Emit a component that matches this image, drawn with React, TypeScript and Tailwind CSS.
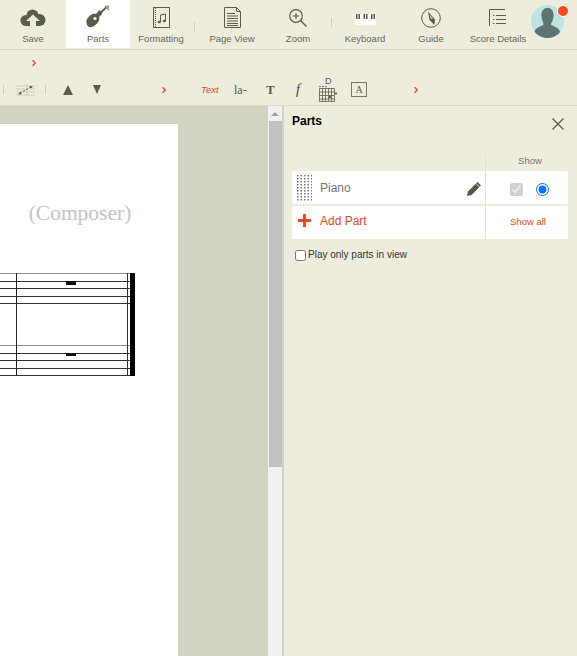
const dark = "#5c5c4c";

function ToolItem({ label, width, active, children }: { label: string; width: string; active?: boolean; children: React.ReactNode }) {
  return (
    <div className={`flex h-full shrink-0 flex-col items-center ${width} ${active ? "bg-white" : ""}`}>
      <div className="flex h-[28px] items-end justify-center">{children}</div>
      <span className="mt-[5px] whitespace-nowrap text-[9.500px] leading-[12px] text-[#666659]">{label}</span>
    </div>
  );
}

function Sep({ className = "" }: { className?: string }) {
  return <div className={`h-[9px] w-px shrink-0 bg-[#cfcdbb] ${className}`} />;
}

function Chevron({ className = "" }: { className?: string }) {
  return (
    <svg width="6" height="8" viewBox="0 0 6 8" className={`shrink-0 ${className}`}>
      <path d="M1.500 1.200 4.300 4 1.500 6.800" fill="none" stroke="#ee4a22" strokeWidth="1.300" />
    </svg>
  );
}

function Staff() {
  const ys = [273, 281, 288, 296, 303, 345, 353, 360, 368, 375];
  return (
    <svg width="178" height="110" viewBox="0 270 178 110" className="mt-[45px] block">
      {ys.map((y, i) => (
        <line key={i} x1="0" x2="130" y1={y + 0.5} y2={y + 0.5} stroke={i % 5 === 0 ? "#8a8a8a" : "#333"} strokeWidth="1" />
      ))}
      <line x1="16.500" x2="16.500" y1="273" y2="376" stroke="#222" />
      <line x1="127.500" x2="127.500" y1="273" y2="376" stroke="#333" />
      <rect x="130" y="273" width="5" height="103" fill="#000" />
      <rect x="66" y="281" width="10" height="4" fill="#111" />
      <rect x="66" y="353" width="10" height="3" fill="#111" />
    </svg>
  );
}

export default function App() {
  return (
    <div className="flex h-[656px] w-[577px] flex-col overflow-hidden bg-[#eeecdd] font-['Liberation_Sans',Arial,sans-serif]">
      {/* main toolbar */}
      <div className="relative flex h-[50px] shrink-0 items-stretch border-b border-[#d3d1bf] pb-px">
        <ToolItem label="Save" width="w-[66px]">
          <svg width="26" height="18" viewBox="0 0 26 18" className="mb-px">
            <circle cx="6" cy="11.500" r="5.500" fill={dark} />
            <circle cx="12.500" cy="6.500" r="6" fill={dark} />
            <circle cx="19.500" cy="11" r="6" fill={dark} />
            <path d="M6 9h14v8H6Z" fill={dark} />
            <path d="M13 5.500 20 12h-4v6h-6v-6H6Z" fill="#eeecdd" />
          </svg>
        </ToolItem>
        <ToolItem label="Parts" width="w-[64px]" active>
          <svg width="24" height="23" viewBox="0 0 24 23">
            <path d="M13.500 5.500c1.300.5 2.300 1.800 2.500 3 .2 1.200-1.700 1.700-2.500 3-.7 1.100.3 2.200-.5 4-.9 2.100-3.800 5.500-7 6.500-2 .6-3.500-.2-4.700-1.500C.900 19 0 17.500.500 15.500c.7-2.800 4-5.700 6-6.500 1.700-.7 2.800.2 4-.5 1.200-.7 1.500-3.500 3-3Z" fill={dark} />
            <circle cx="9" cy="13.500" r="1.600" fill="#fff" />
            <path d="m11.500 11 8.500-8.500" stroke={dark} strokeWidth="1.800" />
            <path d="m19 1 4 4M21 .5l2 2" stroke="#8a8a7c" strokeWidth="1.500" />
          </svg>
        </ToolItem>
        <ToolItem label="Formatting" width="w-[62px]">
          <svg width="17" height="21" viewBox="0 0 17 21">
            <rect x=".5" y=".5" width="16" height="20" fill="none" stroke={dark} />
            <path d="M2.500 1v19" stroke={dark} strokeDasharray="1 1" />
            <path d="M7.500 15V8l5-1v7" fill="none" stroke={dark} />
            <ellipse cx="6.300" cy="15" rx="1.600" ry="1.200" fill={dark} />
            <ellipse cx="11.300" cy="14" rx="1.600" ry="1.200" fill={dark} />
          </svg>
        </ToolItem>
        <div className="flex w-[7px] shrink-0 items-center justify-start pt-[5px]">
          <Sep className="ml-[2px]" />
        </div>
        <ToolItem label="Page View" width="w-[66px]">
          <svg width="17" height="21" viewBox="0 0 17 21">
            <path d="M.5.5h12l4 4v16H.500Z" fill="none" stroke={dark} />
            <path d="M12.500.5v4h4" fill="none" stroke={dark} />
            <path d="M3 6.500h8M3 9h11M3 11.500h11M3 14h11M3 16.500h11M3 18.500h11" stroke={dark} />
          </svg>
        </ToolItem>
        <ToolItem label="Zoom" width="w-[66px]">
          <svg width="18" height="18" viewBox="0 0 18 18" className="mb-px">
            <circle cx="7" cy="7" r="6.300" fill="none" stroke={dark} strokeWidth="1.200" />
            <path d="M7 4v6M4 7h6" stroke={dark} strokeWidth="1.200" />
            <path d="m11.500 11.500 6 6" stroke={dark} strokeWidth="1.200" />
          </svg>
        </ToolItem>
        <div className="relative w-0 shrink-0">
          <Sep className="absolute left-0 top-[18px]" />
        </div>
        <ToolItem label="Keyboard" width="w-[68px]">
          <div className="relative mb-[3px] h-[11px] w-[21px] bg-white">
            <svg width="21" height="11" viewBox="0 0 21 11" className="absolute left-0 top-0">
              <path d="M1 0h1.500v5H1ZM3.500 0H5v5H3.500ZM8.500 0H10v5H8.500ZM11 0h1.500v5H11ZM16 0h1.500v5H16ZM18.500 0H20v5h-1.500Z" fill="#55554a" />
            </svg>
          </div>
        </ToolItem>
        <ToolItem label="Guide" width="w-[64px]">
          <svg width="20" height="20" viewBox="0 0 20 20">
            <circle cx="10" cy="10" r="9.300" fill="none" stroke={dark} strokeWidth="1" />
            <path d="M7 3.500 14 11.500 13.500 17 8.500 12Z" fill={dark} />
            <path d="M8.500 6.500 12 11l-2.200-.500Z" fill="#eeecdd" />
          </svg>
        </ToolItem>
        <ToolItem label="Score Details" width="w-[70px]">
          <svg width="18" height="18" viewBox="0 0 18 18" className="mb-px">
            <path d="M16 .5H.5V17" fill="none" stroke={dark} />
            <path d="M7 6.500h10M7 10.500h10M7 14.500h10" stroke={dark} />
            <path d="M4 6.500h1.500M4 10.500h1.500M4 14.500h1.500" stroke={dark} />
          </svg>
        </ToolItem>
        {/* avatar */}
        <div className="absolute left-[530px] top-[4px] h-[35px] w-[35px] overflow-hidden rounded-full border border-[#e8f0e8] bg-[#bfe3e0]">
          <svg width="33" height="33" viewBox="0 0 35 35">
            <path d="M11 11c0-5 3-8 6.500-8s6.500 3 6.500 8c0 3-1 6-2.500 8-.5 1-.3 2 .5 2.500 3 1.500 7.500 3 8.500 6V35H4v-7.500c1-3 5.500-4.500 8.500-6 .8-.5 1-1.500.5-2.500-1-2-2-5-2-8Z" fill="#5f7370" />
          </svg>
        </div>
        <div className="absolute left-[557px] top-[5px] h-[12px] w-[12px] rounded-full border border-white bg-[#f4481e]" />
      </div>

      {/* second row */}
      <div className="flex h-[24px] shrink-0 items-center pl-[31px] pt-px">
        <Chevron />
      </div>

      {/* third row */}
      <div className="flex h-[31px] shrink-0 items-center">
        <Sep className="ml-[3px]" />
        <svg width="19" height="14" viewBox="0 0 19 14" className="ml-[12px]">
          <path d="M0 3h19M0 6h19M0 9h19M0 12h19M11 1v12" stroke="#cfcdbb" />
          <path d="m4 10 11-6" stroke={dark} strokeDasharray="2 1.500" />
          <ellipse cx="4" cy="10.500" rx="1.500" ry="1" fill={dark} />
          <ellipse cx="15" cy="4" rx="1.500" ry="1" fill={dark} />
        </svg>
        <Sep className="ml-[10px]" />
        <div className="ml-[17px] mt-px h-0 w-0 border-x-[5px] border-b-[10px] border-x-transparent border-b-[#5c5c4c]" />
        <div className="ml-[20px] h-0 w-0 border-x-[4.500px] border-t-[9px] border-x-transparent border-t-[#5c5c4c]" />
        <Chevron className="ml-[60px]" />
        <span className="ml-[34px] mt-px w-[21px] whitespace-nowrap text-[9.500px] italic text-[#ee4a22]">Text</span>
        <span className="ml-[12px] mt-px w-[14px] whitespace-nowrap font-['Liberation_Serif',serif] text-[12px] text-[#5c5c4c]">la-</span>
        <span className="ml-[18px] w-[10px] font-['Liberation_Serif',serif] text-[13px] font-bold text-[#5c5c4c]">T</span>
        <span className="ml-[20px] w-[8px] font-['Liberation_Serif',serif] text-[14px] italic text-[#44443a]">f</span>
        <div className="relative ml-[15px] mt-[7px] h-[17px] w-[19px]">
          <span className="absolute left-[6px] top-[-9px] text-[9px] leading-[10px] text-[#5c5c4c]">D</span>
          <svg width="19" height="17" viewBox="0 0 19 17" className="absolute left-0 top-0">
            <path d="M.5 3.500h15v13H.500ZM.5 7h15M.5 10.500h15M.5 14h15M3.500 3v13M6.500 3v13M9.500 3v13M12.500 3v13" fill="none" stroke={dark} strokeWidth=".8" />
            <circle cx="1" cy="1.500" r=".8" fill={dark} />
            <circle cx="4" cy="1.500" r=".8" fill={dark} />
            <circle cx="7" cy="1.500" r=".8" fill={dark} />
            <circle cx="11" cy="12" r="1" fill="#33332a" />
            <circle cx="17" cy="8.500" r="1" fill="#33332a" />
          </svg>
        </div>
        <div className="ml-[13px] flex h-[15px] w-[16px] items-center justify-center border border-[#77776a] font-['Liberation_Serif',serif] text-[10px] text-[#5c5c4c]">A</div>
        <Chevron className="ml-[46px]" />
      </div>

      {/* work area */}
      <div className="flex min-h-0 flex-1 border-t border-[#dcdbc9]">
        <div className="flex h-full w-[268px] shrink-0 bg-[#d2d3c3] pt-[18px]">
          <div className="w-[178px] shrink-0 bg-white">
            <div className="whitespace-nowrap pr-[18px] pt-[77px] text-center font-['Liberation_Serif',serif] text-[21.500px] leading-[24px] text-[#c4c4c4]">(Composer)</div>
            <Staff />
          </div>
        </div>

        {/* scrollbar */}
        <div className="flex h-full w-[14px] shrink-0 flex-col bg-[#f1f1f1]">
          <div className="flex h-[15px] items-center justify-center">
            <div className="h-0 w-0 border-x-[4px] border-b-[4px] border-x-transparent border-b-[#a3a3a3]" />
          </div>
          <div className="ml-px h-[346px] bg-[#c1c1c1]" />
        </div>
        <div className="h-full w-[2px] shrink-0 bg-[#d2d3c3]" />

        {/* parts panel */}
        <div className="flex-1 pl-[8px] pr-[9px]">
          <div className="flex items-start justify-between pt-[8px]">
            <h2 className="text-[12px] font-bold leading-[14px] text-black">Parts</h2>
            <svg width="12" height="12" viewBox="0 0 12 12" className="mr-[4px] mt-[4px]">
              <path d="m.5.5 11 11M11.500.5l-11 11" stroke="#5c5c4c" strokeWidth="1.300" />
            </svg>
          </div>

          <div className="mt-[25px] flex h-[16px]">
            <div className="w-[194px] border-r border-[#e2e0cf]" />
            <div className="flex-1 pl-[6px] text-center text-[9.500px] leading-[12px] text-[#777]">Show</div>
          </div>

          <div className="flex h-[33px] rounded-[2px] bg-white">
            <div className="flex w-[194px] items-center border-r border-[#e4e2d2] pl-[5px]">
              <svg width="15" height="26" viewBox="0 0 15 26" className="shrink-0">
                {[0, 3.5, 7, 10.5, 14].map((x) =>
                  [0, 3, 6, 9, 12, 15, 18, 21, 24].map((y) => (
                    <rect key={`${x}-${y}`} x={x} y={y} width="1.500" height="1.500" fill="#777" />
                  ))
                )}
              </svg>
              <span className="ml-[8px] flex-1 text-[12px] text-[#777]">Piano</span>
              <svg width="15" height="15" viewBox="0 0 15 15" className="mr-[3px] mt-px">
                <path d="M0 15l1-4.500L10.500 1l3.500 3.500L4.500 14Z" fill="#55554a" />
                <path d="m9 2.500 3.500 3.500" stroke="#fff" strokeWidth=".8" />
              </svg>
            </div>
            <div className="flex flex-1 items-center pl-[24px] pt-[3px]">
              <input type="checkbox" checked disabled readOnly className="m-0 h-[13px] w-[13px]" />
              <input type="radio" checked readOnly className="m-0 ml-[13px] h-[13px] w-[13px]" />
            </div>
          </div>

          <div className="mt-[2px] flex h-[33px] rounded-[2px] bg-white">
            <div className="flex w-[194px] items-center border-r border-[#e4e2d2] pb-[4px] pl-[6px]">
              <svg width="13" height="13" viewBox="0 0 13 13" className="shrink-0">
                <path d="M5 0h3v5h5v3H8v5H5V8H0V5h5Z" fill="#ee4a22" />
              </svg>
              <span className="ml-[9px] text-[12px] text-[#e0492b]">Add Part</span>
            </div>
            <div className="flex flex-1 items-center justify-center pl-[2px] text-[9.500px] text-[#e0492b]">Show all</div>
          </div>

          <label className="ml-[3px] mt-[10px] flex items-center">
            <input type="checkbox" className="m-0 h-[11px] w-[11px]" />
            <span className="ml-[2px] whitespace-nowrap text-[10px] leading-[12px] text-[#333]">Play only parts in view</span>
          </label>
        </div>
      </div>
    </div>
  );
}
